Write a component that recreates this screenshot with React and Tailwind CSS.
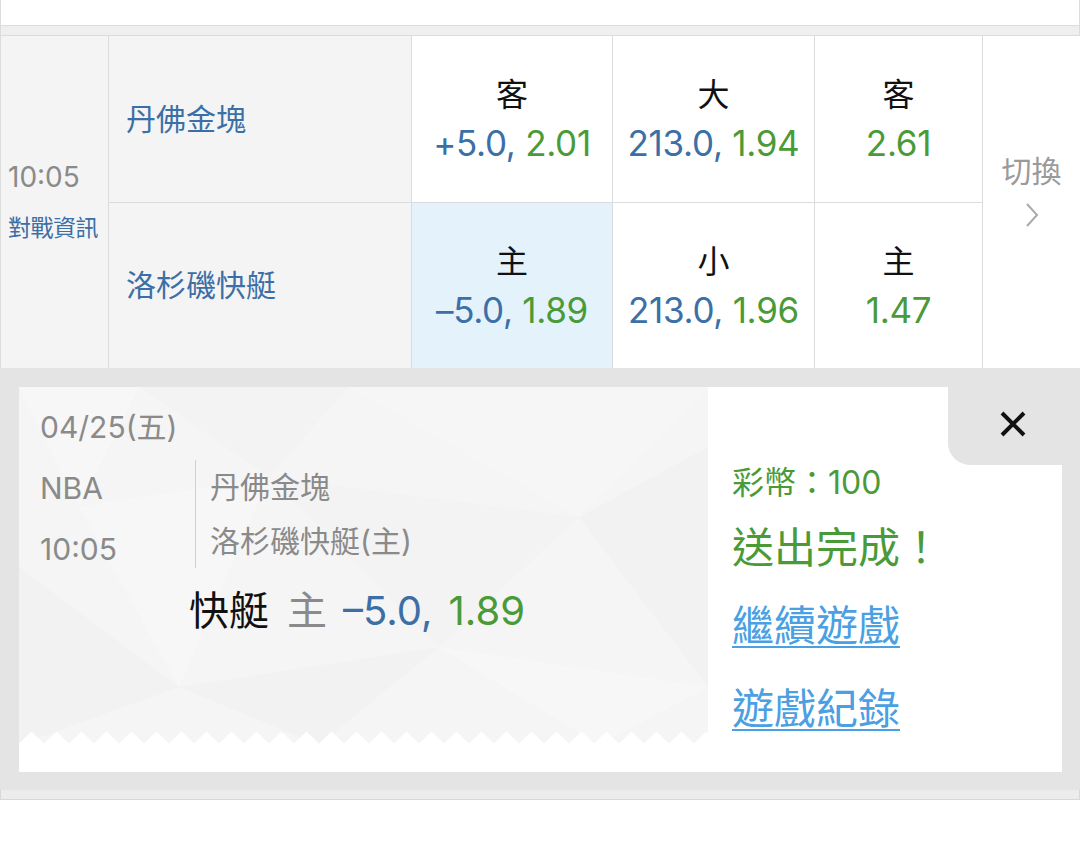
import React from 'react'

const BLUE = 'text-[#3b6fa6]'
const GREEN = 'text-[#4a9a38]'

const OddsCell = ({ label, line, odds, width, active }) => {
  return (
    <div
      className={`${width} h-full flex flex-col items-center justify-center border-r border-[#dcdcdc] ${
        active ? 'bg-[#e4f2fc]' : 'bg-white'
      }`}
    >
      <div className="text-[32px] leading-[48px] text-[#111]">{label}</div>
      <div className="text-[35px] leading-[48px] tracking-[-0.3px]">
        {line && <span className={BLUE}>{line}, </span>}
        <span className={GREEN}>{odds}</span>
      </div>
    </div>
  )
}

const MatchRow = ({ team, cells, height, border }) => {
  return (
    <div className={`flex ${height} ${border ? 'border-b border-[#dcdcdc]' : ''}`}>
      <div className="w-[303px] h-full flex items-center pl-[17px] bg-[#f4f4f4] border-r border-[#dcdcdc]">
        <span className={`text-[30px] ${BLUE}`}>{team}</span>
      </div>
      <OddsCell width="w-[201px]" {...cells[0]} />
      <OddsCell width="w-[202px]" {...cells[1]} />
      <OddsCell width="w-[168px]" {...cells[2]} />
    </div>
  )
}

function MatchTable() {
  return (
    <div className="flex h-[332px] border-l border-[#dcdcdc]">
      <div className="w-[108px] h-full bg-[#f4f4f4] border-r border-[#dcdcdc] flex flex-col justify-center gap-[14px] pl-[7px] pt-[4px]">
        <div className="text-[28px] leading-[34px] text-[#8a8a8a]">10:05</div>
        <div className={`text-[23px] leading-[40px] tracking-[-0.5px] ${BLUE}`}>對戰資訊</div>
      </div>
      <div className="flex flex-col">
        <MatchRow
          team="丹佛金塊"
          height="h-[167px]"
          border
          cells={[
            { label: '客', line: '+5.0', odds: '2.01' },
            { label: '大', line: '213.0', odds: '1.94' },
            { label: '客', odds: '2.61' },
          ]}
        />
        <MatchRow
          team="洛杉磯快艇"
          height="h-[165px]"
          cells={[
            { label: '主', line: '–5.0', odds: '1.89', active: true },
            { label: '小', line: '213.0', odds: '1.96' },
            { label: '主', odds: '1.47' },
          ]}
        />
      </div>
      <div className="flex-1 bg-white flex flex-col items-center justify-center pb-[24px]">
        <div className="text-[30px] leading-[38px] text-[#9a9a9a]">切換</div>
        <svg width="14" height="26" viewBox="0 0 14 26" className="mt-[12px]">
          <polyline points="2,2 12,13 2,24" fill="none" stroke="#aaaaaa" strokeWidth="2" />
        </svg>
      </div>
    </div>
  )
}

const Backdrop = () => {
  const teeth = []
  for (let i = 0; i < 28; i++) {
    teeth.push(`${i * 25},14 ${i * 25 + 12.5},2 ${(i + 1) * 25},14`)
  }
  return (
    <>
      <svg className="absolute inset-0" width="689" height="358" viewBox="0 0 689 358">
        <polygon points="0,0 120,0 60,120" fill="#f7f7f7" />
        <polygon points="120,0 330,0 250,90" fill="#f3f3f3" />
        <polygon points="60,120 250,90 160,300" fill="#f7f7f7" />
        <polygon points="330,0 689,0 560,130" fill="#f6f6f6" />
        <polygon points="250,90 560,130 420,260" fill="#f3f3f3" />
        <polygon points="160,300 420,260 300,358" fill="#f2f2f2" />
        <polygon points="560,130 689,60 689,300" fill="#f2f2f2" />
        <polygon points="420,260 689,300 580,358" fill="#f7f7f7" />
        <polygon points="0,180 160,300 0,358" fill="#f2f2f2" />
      </svg>
      <svg className="absolute left-0 bottom-0" width="689" height="14" viewBox="0 0 689 14">
        {teeth.map((p, i) => (
          <polygon key={i} points={p} fill="#ffffff" strokeLinejoin="round" stroke="#ffffff" strokeWidth="2" />
        ))}
      </svg>
    </>
  )
}

function TicketCard() {
  return (
    <div className="flex h-[385px] bg-white">
      <div className="w-[689px] flex flex-col">
        <div className="relative h-[358px] bg-[#f5f5f5]">
          <Backdrop />
          <div className="relative pl-[21px] pt-[10px] text-[#8a8a8a]">
            <div className="h-[61px] flex items-center text-[30px]">04/25(五)</div>
            <div className="flex">
              <div className="w-[155px]">
                <div className="h-[61px] flex items-center text-[30px]">NBA</div>
                <div className="h-[61px] flex items-center text-[30px]">10:05</div>
              </div>
              <div className="mt-[2px] h-[108px] border-l border-[#cfcfcf] pl-[14px]">
                <div className="h-[54px] flex items-center text-[30px]">丹佛金塊</div>
                <div className="h-[54px] flex items-center text-[30px]">洛杉磯快艇(主)</div>
              </div>
            </div>
            <div className="h-[62px] flex items-center pl-[149px] text-[40px]">
              <span className="text-[#111]">快艇</span>
              <span className="ml-[18px] text-[#8a8a8a]">主</span>
              <span className={`ml-[16px] ${BLUE}`}>–5.0,</span>
              <span className={`ml-[16px] ${GREEN}`}>1.89</span>
            </div>
          </div>
        </div>
      </div>
      <div className="w-[354px] flex flex-col">
        <div className="flex justify-end">
          <div className="w-[114px] h-[78px] bg-[#e4e4e4] rounded-bl-[22px] flex items-center justify-center pl-[16px] pb-[4px]">
            <svg width="28" height="28" viewBox="0 0 28 28">
              <path d="M3 3 L25 25 M25 3 L3 25" stroke="#111" strokeWidth="4" />
            </svg>
          </div>
        </div>
        <div className={`pl-[24px] ${GREEN}`}>
          <div className="h-[36px] flex items-center text-[32px]">彩幣：100</div>
          <div className="mt-[18px] h-[56px] flex items-center text-[42px]">送出完成！</div>
          <div className="mt-[22px] h-[56px] flex items-center text-[42px] text-[#4aa0e2] underline decoration-2 underline-offset-[5px]">
            繼續遊戲
          </div>
          <div className="mt-[27px] h-[56px] flex items-center text-[42px] text-[#4aa0e2] underline decoration-2 underline-offset-[5px]">
            遊戲紀錄
          </div>
        </div>
      </div>
    </div>
  )
}

export default function App() {
  return (
    <div className="w-[1080px] h-[861px] bg-white font-['Inter','Noto_Sans_CJK_TC',sans-serif]">
      <div className="h-[26px] bg-white border-x border-b border-[#dcdcdc]" />
      <div className="h-[10px] bg-[#efefef] border-x border-b border-[#dcdcdc]" />
      <MatchTable />
      <div className="bg-[#e4e4e4] pl-[19px] pr-[18px] pt-[19px] pb-[18px]">
        <TicketCard />
      </div>
      <div className="h-[10px] bg-[#ececec] border-x border-b border-[#d8d8d8]" />
    </div>
  )
}
